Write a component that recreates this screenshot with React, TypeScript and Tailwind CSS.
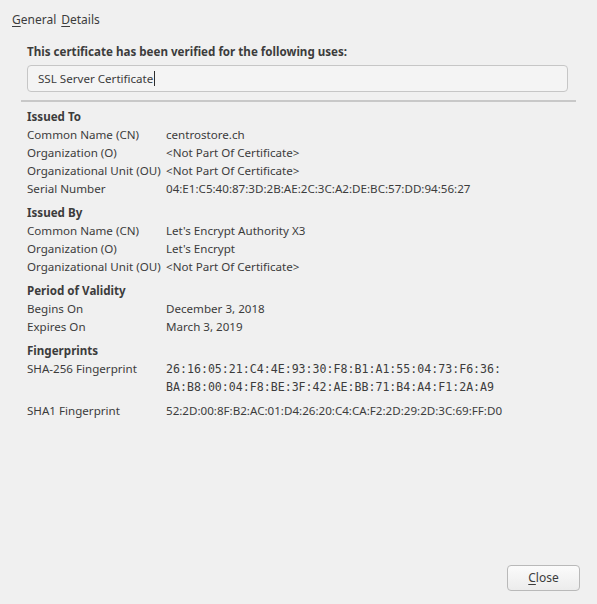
import React from 'react';

const sans = { fontFamily: '"Noto Sans", "DejaVu Sans", sans-serif' };

interface Row {
  label: string;
  value: React.ReactNode;
  mono?: boolean;
}

interface Section {
  title: string;
  rows: Row[];
}

const sections: Section[] = [
  {
    title: 'Issued To',
    rows: [
      { label: 'Common Name (CN)', value: 'centrostore.ch' },
      { label: 'Organization (O)', value: '<Not Part Of Certificate>' },
      { label: 'Organizational Unit (OU)', value: '<Not Part Of Certificate>' },
      { label: 'Serial Number', value: '04:E1:C5:40:87:3D:2B:AE:2C:3C:A2:DE:BC:57:DD:94:56:27' },
    ],
  },
  {
    title: 'Issued By',
    rows: [
      { label: 'Common Name (CN)', value: "Let's Encrypt Authority X3" },
      { label: 'Organization (O)', value: "Let's Encrypt" },
      { label: 'Organizational Unit (OU)', value: '<Not Part Of Certificate>' },
    ],
  },
  {
    title: 'Period of Validity',
    rows: [
      { label: 'Begins On', value: 'December 3, 2018' },
      { label: 'Expires On', value: 'March 3, 2019' },
    ],
  },
  {
    title: 'Fingerprints',
    rows: [
      {
        label: 'SHA-256 Fingerprint',
        mono: true,
        value: (
          <>
            26:16:05:21:C4:4E:93:30:F8:B1:A1:55:04:73:F6:36:
            <br />
            BA:B8:00:04:F8:BE:3F:42:AE:BB:71:B4:A4:F1:2A:A9
          </>
        ),
      },
      { label: 'SHA1 Fingerprint', value: '52:2D:00:8F:B2:AC:01:D4:26:20:C4:CA:F2:2D:29:2D:3C:69:FF:D0' },
    ],
  },
];

export default function App() {
  return (
    <div className="w-[597px] h-[604px] bg-[#f0f0f0] text-[#3c3c3c] text-[11.6px] flex flex-col overflow-hidden" style={sans}>
      <div className="flex gap-[5px] pl-[12px] pt-[11px] h-[20px] leading-[18px] text-[12px] text-[#3c3c3c]">
        <span><span className="underline underline-offset-2">G</span>eneral</span>
        <span><span className="underline underline-offset-2">D</span>etails</span>
      </div>

      <div className="pl-[27px] pr-[29px] pt-[24px]">
        <div className="font-bold leading-[16px]">This certificate has been verified for the following uses:</div>
        <div className="mt-[5px] h-[27px] rounded-[4px] border border-[#c6c6c6] bg-[#f4f4f4] flex items-center pl-[10px]">
          <span>SSL Server Certificate</span>
          <span className="inline-block w-px h-[15px] bg-[#2c2c2c] ml-px" />
        </div>
      </div>

      <div className="mx-[21px] mt-[8px] h-[2px] bg-[#c8c8c8]" />

      <div className="pl-[27px] pt-[6px]">
        {sections.map((s) => (
          <div key={s.title} className="mb-[6px]">
            <div className="font-bold leading-[18px]">{s.title}</div>
            {s.rows.map((r) => (
              <div key={r.label} className={`flex leading-[18px] ${r.mono ? 'mb-[6px]' : ''}`}>
                <div className="w-[139px] shrink-0">{r.label}</div>
                <div
                  className={r.mono ? 'text-[11.6px]' : ''}
                  style={r.mono ? { fontFamily: '"DejaVu Sans Mono", monospace' } : undefined}
                >
                  {r.value}
                </div>
              </div>
            ))}
          </div>
        ))}
      </div>

      <div className="flex-1" />
      <div className="flex justify-end pr-[17px] pb-[13px]">
        <button className="w-[73px] h-[26px] rounded-[4px] border border-[#b9b9b9] bg-gradient-to-b from-[#fbfbfb] to-[#ececec] text-[#3c3c3c] text-[12px]" style={sans}>
          <span className="underline underline-offset-2">C</span>lose
        </button>
      </div>
    </div>
  );
}
